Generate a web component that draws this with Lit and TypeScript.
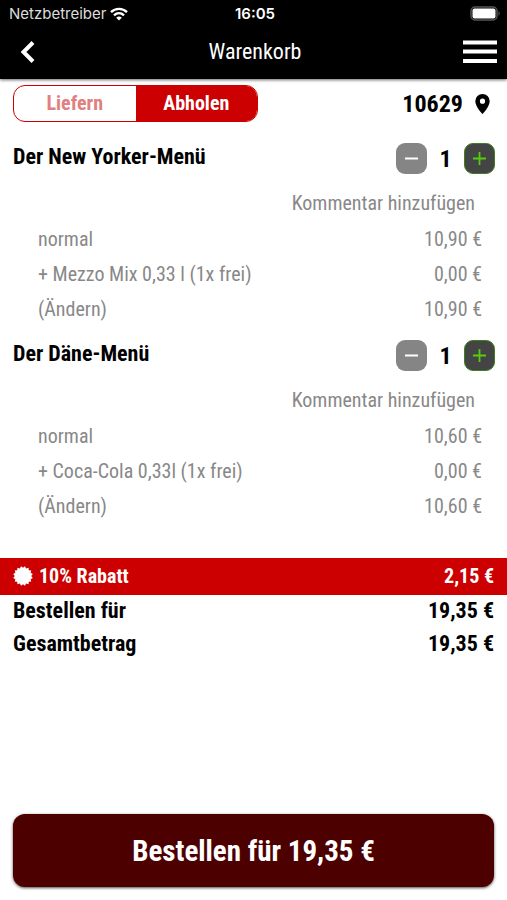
import { LitElement, html, css } from "lit";
import { customElement, state } from "lit/decorators.js";

interface CartItem {
  name: string;
  count: number;
  extra: string;
  price: string;
}

@customElement("app-root")
export class AppRoot extends LitElement {
  @state() private mode: "deliver" | "pickup" = "pickup";

  @state() private items: CartItem[] = [
    { name: "Der New Yorker-Menü", count: 1, extra: "+ Mezzo Mix 0,33 l (1x frei)", price: "10,90 €" },
    { name: "Der Däne-Menü", count: 1, extra: "+ Coca-Cola 0,33l (1x frei)", price: "10,60 €" },
  ];

  static styles = css`
    :host {
      display: flex;
      flex-direction: column;
      min-height: 100vh;
      background: #fff;
      color: #000;
      font-family: "Roboto Condensed", "Liberation Sans Narrow", Roboto, sans-serif;
      font-size: 20px;
      line-height: 36px;
    }
    * {
      box-sizing: border-box;
    }
    button {
      font: inherit;
      color: inherit;
      background: none;
      border: 0;
      padding: 0;
      cursor: pointer;
    }
    svg {
      display: block;
      flex: none;
    }
    h1, h2 {
      margin: 0;
      font: inherit;
    }
    .top {
      background: #000;
      color: #fff;
      box-shadow: 0 1px 3px rgba(0, 0, 0, 0.6);
    }
    .status {
      display: grid;
      grid-template-columns: 1fr auto 1fr;
      align-items: center;
      height: 27px;
      padding: 0 6px 0 9px;
      font: 15px/27px Inter, sans-serif;
    }
    .carrier {
      display: flex;
      align-items: center;
      gap: 4px;
      color: #ddd;
    }
    .time {
      font-weight: 600;
    }
    .battery {
      justify-self: end;
    }
    .nav {
      display: grid;
      grid-template-columns: 1fr auto 1fr;
      align-items: center;
      height: 52px;
      padding: 0 10px 2px 13px;
    }
    .title {
      font-size: 22px;
    }
    .menu {
      justify-self: end;
    }
    .back {
      justify-self: start;
    }
    .options {
      display: flex;
      justify-content: space-between;
      align-items: center;
      padding: 6px 13px 0;
    }
    .toggle {
      display: flex;
      width: 245px;
      height: 37px;
      border: 1px solid #c00;
      border-radius: 12px;
      overflow: hidden;
    }
    .toggle button {
      flex: 1;
      padding-bottom: 1px;
      color: #e08080;
      font-weight: 700;
      line-height: 34px;
    }
    .toggle .on {
      background: #c00;
      color: #fff;
    }
    .place {
      display: flex;
      align-items: center;
      gap: 12px;
      padding-right: 4px;
      font-size: 24px;
      font-weight: 700;
    }
    .items {
      padding: 19px 12px 23px 13px;
    }
    .item {
      padding: 2px 0 12px;
    }
    .head {
      display: flex;
      justify-content: space-between;
      height: 42px;
    }
    .name {
      font-size: 22px;
      font-weight: 700;
      line-height: 27px;
    }
    .stepper {
      display: flex;
      align-items: center;
      height: 31px;
      font-size: 24px;
      font-weight: 700;
    }
    .step {
      display: grid;
      place-items: center;
      width: 31px;
      height: 31px;
      border-radius: 9px;
      background: #858585;
      color: #fff;
    }
    .plus {
      background: #444;
      border: 1px solid #3d7f1d;
      color: #5c1;
    }
    .count {
      width: 37px;
      text-align: center;
    }
    .note,
    .line {
      color: #888;
    }
    .note {
      display: block;
      margin: 0 20px 0 auto;
    }
    .line {
      display: flex;
      justify-content: space-between;
      height: 35px;
      padding: 0 13px 0 25px;
    }
    .discount {
      display: flex;
      align-items: center;
      height: 37px;
      padding: 0 13px 1px;
      gap: 6px;
      background: #c00;
      color: #fff;
      font-weight: 700;
    }
    .amount {
      margin-left: auto;
    }
    .total {
      display: flex;
      justify-content: space-between;
      height: 33px;
      padding: 0 13px;
      font-size: 22px;
      font-weight: 700;
      line-height: 31px;
    }
    .order {
      height: 73px;
      margin: auto 13px 13px;
      border-radius: 12px;
      background: #4d0000;
      color: #fff;
      font-size: 29px;
      font-weight: 700;
      box-shadow: 0 1px 3px rgba(0, 0, 0, 0.7);
    }
  `;

  private change(index: number, delta: number) {
    this.items = this.items.map((item, i) =>
      i === index ? { ...item, count: Math.max(1, item.count + delta) } : item
    );
  }

  private renderItem(item: CartItem, index: number) {
    return html`
      <section class="item">
        <div class="head">
          <h2 class="name">${item.name}</h2>
          <div class="stepper">
            <button class="step" aria-label="Weniger" @click=${() => this.change(index, -1)}>
              <svg width="15" height="15" viewBox="0 0 15 15"><path d="M1 7.500H14" stroke="currentColor" stroke-width="2" /></svg>
            </button>
            <span class="count">${item.count}</span>
            <button class="step plus" aria-label="Mehr" @click=${() => this.change(index, 1)}>
              <svg width="15" height="15" viewBox="0 0 15 15"><path d="M1 7.500H14M7.500 1V14" stroke="currentColor" stroke-width="1.8" /></svg>
            </button>
          </div>
        </div>
        <button class="note">Kommentar hinzufügen</button>
        <div class="line"><span>normal</span><span>${item.price}</span></div>
        <div class="line"><span>${item.extra}</span><span>0,00 €</span></div>
        <div class="line"><button>(Ändern)</button><span>${item.price}</span></div>
      </section>
    `;
  }

  private starPoints() {
    return Array.from({ length: 32 }, (_, i) => {
      const r = i % 2 ? 8.2 : 10;
      const a = ((i + 1) * Math.PI) / 16;
      return `${(10 + r * Math.sin(a)).toFixed(2)},${(10 - r * Math.cos(a)).toFixed(2)}`;
    }).join(" ");
  }

  render() {
    return html`
      <header class="top">
        <div class="status">
          <span class="carrier">
            Netzbetreiber
            <svg width="18" height="14" viewBox="0 0 18 14" fill="none" stroke="#fff" stroke-width="2.4">
              <path d="M1 5.2C5.5 .7 12.500 .7 17 5.200M4 8.300C7 5.500 11 5.500 14 8.300" />
              <path d="M9 13.500L6.200 10.700Q9 8.400 11.800 10.700Z" fill="#fff" stroke="none" />
            </svg>
          </span>
          <span class="time">16:05</span>
          <svg class="battery" width="31" height="15" viewBox="0 0 31 15">
            <rect x="1" y="1" width="26" height="13" rx="4" fill="none" stroke="#555" stroke-width="1.500" />
            <rect x="2.500" y="2.500" width="23" height="10" rx="2" fill="#fff" />
            <path d="M28.500 5Q31 7.500 28.500 10Z" fill="#555" />
          </svg>
        </div>
        <nav class="nav">
          <button class="back" aria-label="Zurück">
            <svg width="28" height="28" viewBox="0 0 28 28"><path d="M20 4.500L10.500 14L20 23.500" fill="none" stroke="#fff" stroke-width="4" /></svg>
          </button>
          <h1 class="title">Warenkorb</h1>
          <button class="menu" aria-label="Menü">
            <svg width="34" height="24" viewBox="0 0 34 24"><path d="M0 2.500H34M0 11.500H34M0 21H34" stroke="#fff" stroke-width="4" /></svg>
          </button>
        </nav>
      </header>
      <div class="options">
        <div class="toggle">
          <button class=${this.mode === "deliver" ? "on" : ""} @click=${() => (this.mode = "deliver")}>Liefern</button>
          <button class=${this.mode === "pickup" ? "on" : ""} @click=${() => (this.mode = "pickup")}>Abholen</button>
        </div>
        <button class="place">
          10629
          <svg width="15" height="20" viewBox="0 0 15 20"><path fill-rule="evenodd" d="M7.500 0A7.200 7.200 0 0 0 .3 7.200C.3 12.500 7.500 20 7.500 20S14.700 12.500 14.700 7.200A7.200 7.200 0 0 0 7.500 0ZM7.500 4.600A2.600 2.600 0 1 1 7.500 9.800A2.600 2.600 0 1 1 7.500 4.600Z" /></svg>
        </button>
      </div>
      <main class="items">${this.items.map((item, i) => this.renderItem(item, i))}</main>
      <div class="discount">
        <svg width="20" height="20" viewBox="0 0 20 20"><polygon points=${this.starPoints()} fill="#fff" /></svg>
        <span>10% Rabatt</span>
        <span class="amount">2,15 €</span>
      </div>
      <div class="total"><span>Bestellen für</span><span>19,35 €</span></div>
      <div class="total"><span>Gesamtbetrag</span><span>19,35 €</span></div>
      <button class="order">Bestellen für 19,35 €</button>
    `;
  }
}
